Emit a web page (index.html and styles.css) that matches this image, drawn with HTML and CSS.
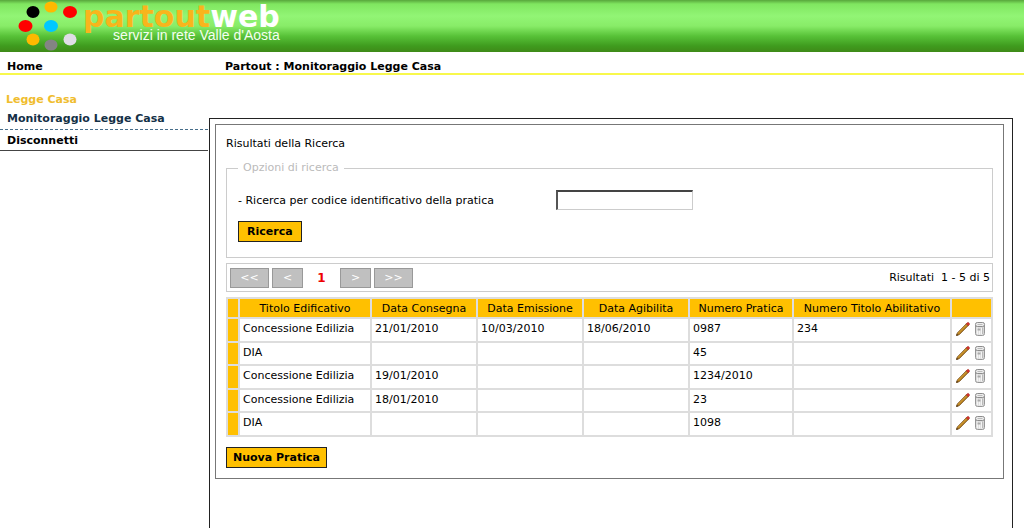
FILE: index.html
```html
<!DOCTYPE html>
<html lang="it">
<head>
<meta charset="utf-8">
<title>Partout : Monitoraggio Legge Casa</title>
<link rel="stylesheet" href="styles.css">
</head>
<body>
<svg class="sprite" aria-hidden="true">
  <symbol id="pencil" viewBox="0 0 16 16">
    <path d="M1.500 14.500 2.300 12 11.400 2.700 13.300 4.500 4.200 13.700Z" fill="#b8821e" stroke="#74491a" stroke-width=".8"/>
    <path d="M3.200 12.300 12 3.400" stroke="#e0aa3c" stroke-width=".8"/>
    <path d="M11.200 2.800 12.300 1.700Q13.200 1 14 1.900T14.300 3.700L13.200 4.800Z" fill="#d8322c" stroke="#a02a22" stroke-width=".6"/>
    <path d="M1.200 14.800 1.800 12.800 3.200 14.200Z" fill="#4a3212"/>
  </symbol>
  <symbol id="trash" viewBox="0 0 16 16">
    <path d="M3.500 4V12.500Q3.500 14.500 5.500 14.500H10.500Q12.500 14.500 12.500 12.500V4Z" fill="#dedede" stroke="#969696"/>
    <path d="M5.500 6.500V13M7.500 7V13.500M9.500 7V13.500" stroke="#f4f4f4"/>
    <path d="M10.700 6.500V13" stroke="#b0b0b0"/>
    <path d="M5.500 7.500H8.500V9.500H5.500Z" fill="#aaa"/>
    <rect x="3.500" y="1.500" width="9" height="4" rx="1.800" fill="#ececec" stroke="#8c8c8c"/>
    <path d="M5.500 3.500H10.500" stroke="#bbb"/>
  </symbol>
</svg>

<header class="banner">
  <svg class="logo" viewBox="0 0 83 52" role="img" aria-label="Partoutweb">
    <ellipse cx="51" cy="7" rx="6.500" ry="5.500" fill="#ffb900"/>
    <ellipse cx="33" cy="12" rx="6.500" ry="6" fill="#000"/>
    <ellipse cx="70" cy="12" rx="7" ry="6" fill="#f00"/>
    <ellipse cx="25.500" cy="26" rx="7" ry="6" fill="#f00"/>
    <ellipse cx="51" cy="26" rx="7" ry="6" fill="#00c8ff"/>
    <ellipse cx="33" cy="39.500" rx="6.500" ry="6" fill="#ffb900"/>
    <ellipse cx="70" cy="39.500" rx="6.500" ry="6" fill="#e0dde6"/>
    <ellipse cx="51" cy="45" rx="6.500" ry="5.500" fill="#848484"/>
  </svg>
  <div class="brand">
    <div class="brand-name"><span class="brand-accent">partout</span>web</div>
    <div class="brand-tagline">servizi in rete Valle d'Aosta</div>
  </div>
</header>

<nav class="topbar">
  <a class="topbar-home" href="#">Home</a>
  <span class="topbar-path">Partout : Monitoraggio Legge Casa</span>
</nav>

<div class="layout">
  <aside class="sidebar">
    <h2 class="menu-title">Legge Casa</h2>
    <a class="menu-link menu-link-current" href="#">Monitoraggio Legge Casa</a>
    <a class="menu-link menu-link-last" href="#">Disconnetti</a>
  </aside>

  <main class="content">
    <section class="panel">
      <h1 class="panel-title">Risultati della Ricerca</h1>

      <form>
        <fieldset class="search">
          <legend>Opzioni di ricerca</legend>
          <div class="field">
            <label for="codice">- Ricerca per codice identificativo della pratica</label>
            <input id="codice" class="field-input" type="text">
          </div>
          <button class="button button-search" type="button">Ricerca</button>
        </fieldset>
      </form>

      <div class="pager">
        <button class="page-button page-wide" type="button">&lt;&lt;</button>
        <button class="page-button" type="button">&lt;</button>
        <span class="page-current">1</span>
        <button class="page-button" type="button">&gt;</button>
        <button class="page-button page-wide" type="button">&gt;&gt;</button>
        <span class="page-info">Risultati&nbsp; 1 - 5 di 5</span>
      </div>

      <table class="results">
        <colgroup>
          <col class="col-mark"><col class="col-title"><col class="col-date"><col class="col-date"><col class="col-date"><col class="col-number"><col class="col-permit"><col class="col-actions">
        </colgroup>
        <thead>
          <tr><th></th><th>Titolo Edificativo</th><th>Data Consegna</th><th>Data Emissione</th><th>Data Agibilita</th><th>Numero Pratica</th><th>Numero Titolo Abilitativo</th><th></th></tr>
        </thead>
        <tbody>
          <tr><td class="mark"></td><td>Concessione Edilizia</td><td>21/01/2010</td><td>10/03/2010</td><td>18/06/2010</td><td>0987</td><td>234</td>
            <td><div class="actions"><button class="icon" type="button" aria-label="Modifica"><svg><use href="#pencil"/></svg></button><button class="icon" type="button" aria-label="Elimina"><svg><use href="#trash"/></svg></button></div></td></tr>
          <tr><td class="mark"></td><td>DIA</td><td></td><td></td><td></td><td>45</td><td></td>
            <td><div class="actions"><button class="icon" type="button" aria-label="Modifica"><svg><use href="#pencil"/></svg></button><button class="icon" type="button" aria-label="Elimina"><svg><use href="#trash"/></svg></button></div></td></tr>
          <tr><td class="mark"></td><td>Concessione Edilizia</td><td>19/01/2010</td><td></td><td></td><td>1234/2010</td><td></td>
            <td><div class="actions"><button class="icon" type="button" aria-label="Modifica"><svg><use href="#pencil"/></svg></button><button class="icon" type="button" aria-label="Elimina"><svg><use href="#trash"/></svg></button></div></td></tr>
          <tr><td class="mark"></td><td>Concessione Edilizia</td><td>18/01/2010</td><td></td><td></td><td>23</td><td></td>
            <td><div class="actions"><button class="icon" type="button" aria-label="Modifica"><svg><use href="#pencil"/></svg></button><button class="icon" type="button" aria-label="Elimina"><svg><use href="#trash"/></svg></button></div></td></tr>
          <tr><td class="mark"></td><td>DIA</td><td></td><td></td><td></td><td>1098</td><td></td>
            <td><div class="actions"><button class="icon" type="button" aria-label="Modifica"><svg><use href="#pencil"/></svg></button><button class="icon" type="button" aria-label="Elimina"><svg><use href="#trash"/></svg></button></div></td></tr>
        </tbody>
      </table>

      <button class="button" type="button">Nuova Pratica</button>
    </section>
  </main>
</div>
</body>
</html>
```
FILE: styles.css
```css
* { box-sizing: border-box; }

body {
  margin: 0;
  min-height: 100vh;
  display: flex;
  flex-direction: column;
  background: #fff;
  color: #000;
  font: 11px/14px Verdana, "DejaVu Sans", sans-serif;
}

a { color: inherit; text-decoration: none; }
button, input { font: inherit; color: inherit; }
.sprite { display: none; }

.banner {
  display: flex;
  height: 52px;
  background: linear-gradient(#58a63c 0, #80e660 4px, #92f575 16px, #88ec68 26px, #58c238 36px, #3f9b1e 46px, #3f8a18 52px);
}
.logo { width: 83px; height: 52px; flex: none; }
.brand { display: flex; flex-direction: column; }
.brand-name { color: #fff; font: bold 30px/28px "DejaVu Sans", sans-serif; padding-top: 3px; }
.brand-accent { color: #f8b51c; }
.brand-tagline { color: #f4fff0; font: 14px/8px "Liberation Sans", Arial, sans-serif; text-align: right; }

.topbar {
  display: flex;
  padding-top: 8px;
  border-bottom: 2px solid #f8f84c;
  font-weight: bold;
  line-height: 13px;
}
.topbar-home { width: 225px; padding-left: 7px; }

.layout { flex: 1; display: flex; }
.sidebar { width: 208px; flex: none; padding-top: 18px; font-weight: bold; }
.menu-title { margin: 0 0 1px; padding-left: 6px; font-size: 11px; line-height: 14px; color: #f0bd2e; }
.menu-link { display: block; padding: 4px 0 3px 7px; }
.menu-link-current { color: #143046; border-bottom: 1px dashed #466d8a; }
.menu-link-last { padding-bottom: 2px; border-bottom: 1px solid #444; }

.content {
  flex: 1;
  min-width: 0;
  margin: 43px 11px 0 1px;
  padding: 5px 8px 0 5px;
  border: 1px solid #222;
  border-bottom: 0;
}
.panel { border: 1px solid #777; padding: 12px 10px 10px; }
.panel-title { margin: 0 0 10px; font-size: 11px; line-height: 14px; font-weight: normal; }

.search { margin: 0 0 5px; padding: 15px 11px; border: 1px solid #ccc; min-width: 0; }
.search legend { padding: 0 5px; color: #bbb; }
.field { display: flex; align-items: center; margin-bottom: 11px; }
.field label { flex: 0 0 318px; padding-top: 2px; }
.field-input {
  width: 137px;
  height: 20px;
  padding: 0 3px;
  background: #fff;
  border: 1px solid #ccc;
  border-top: 2px solid #444;
  border-left: 2px solid #555;
}
.button {
  height: 21px;
  padding: 0 6px;
  background: #ffc000;
  border: 1px solid #222;
  font-weight: bold;
}
.button-search { padding: 0 8px; }

.pager {
  display: flex;
  align-items: center;
  gap: 3px;
  padding: 4px 2px 3px 3px;
  margin-bottom: 5px;
  border: 1px solid #ccc;
}
.page-button { width: 31px; height: 20px; padding: 0; background: #c0c0c0; border: 1px solid #999; color: #fff; }
.page-wide { width: 39px; }
.page-current { width: 31px; text-align: center; color: #e00; font-size: 12px; font-weight: bold; }
.page-info { margin-left: auto; }

.results { width: 100%; table-layout: fixed; border-collapse: collapse; margin-bottom: 10px; }
.results th, .results td { border: 2px solid #ddd; text-align: left; white-space: nowrap; }
.results th { height: 20px; background: #ffc000; font-weight: normal; text-align: center; padding: 1px 0 0; }
.results td { height: 24px; padding: 0 3px 2px; }
.results tr:nth-child(even) td { height: 23px; }
.results .mark { background: #ffc000; }
.col-mark { width: 12px; }
.col-title { width: 132px; }
.col-date { width: 106px; }
.col-number { width: 104px; }
.col-permit { width: 158px; }
.col-actions { width: 41px; }

.actions { display: flex; justify-content: flex-end; gap: 1px; }
.icon { width: 16px; height: 16px; padding: 0; border: 0; background: none; flex: none; }
.icon svg { display: block; width: 16px; height: 16px; }
```
